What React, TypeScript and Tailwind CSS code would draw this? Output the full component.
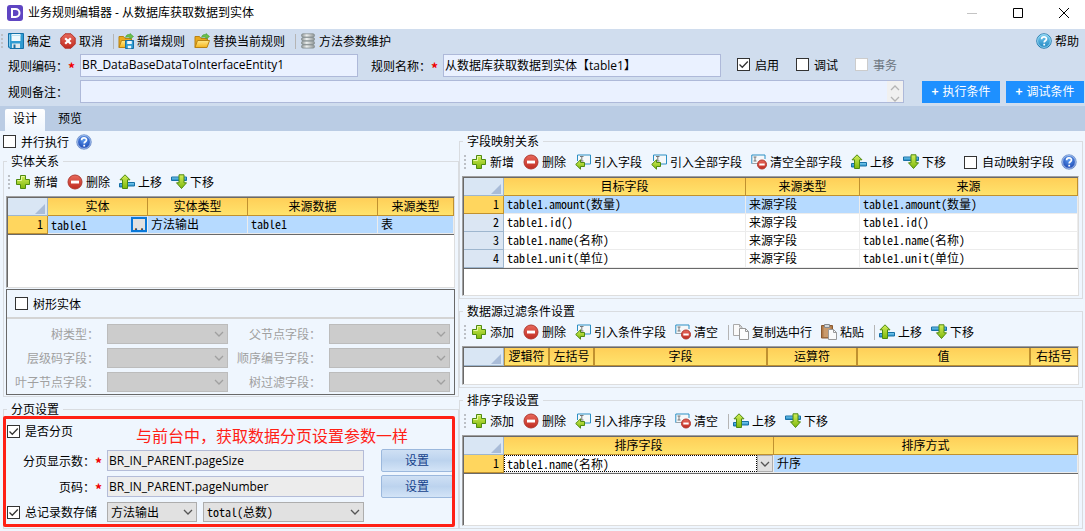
import { useId } from "react";
import type { ReactNode } from "react";
import clsx from "clsx";

const MONO = "font-['Noto_Sans_Mono_CJK_SC','Liberation_Mono','Noto_Sans_CJK_SC',monospace]";
const LATIN = "font-['Open_Sans','Noto_Sans_CJK_SC',sans-serif]";

/* ---------- icons ---------- */

function IconDefs() {
  return (
    <svg className="absolute h-0 w-0" aria-hidden="true">
      <defs>
        <linearGradient id="g-green" x1="0" y1="0" x2="0" y2="1">
          <stop offset="0" stopColor="#d2ee5a" />
          <stop offset="1" stopColor="#7fb80c" />
        </linearGradient>
        <linearGradient id="g-red" x1="0" y1="0" x2="0" y2="1">
          <stop offset="0" stopColor="#e8695c" />
          <stop offset="1" stopColor="#c02b20" />
        </linearGradient>
        <linearGradient id="g-blue" x1="0" y1="0" x2="0" y2="1">
          <stop offset="0" stopColor="#7fd0f2" />
          <stop offset="1" stopColor="#1b83c0" />
        </linearGradient>
        <linearGradient id="g-folder" x1="0" y1="0" x2="0" y2="1">
          <stop offset="0" stopColor="#ffe98a" />
          <stop offset="1" stopColor="#f5b41c" />
        </linearGradient>
        <linearGradient id="g-gray" x1="0" y1="0" x2="1" y2="0">
          <stop offset="0" stopColor="#8d9494" />
          <stop offset="0.4" stopColor="#eef1f1" />
          <stop offset="1" stopColor="#8d9494" />
        </linearGradient>
        <radialGradient id="g-navy" cx="0.5" cy="0.35" r="0.7">
          <stop offset="0" stopColor="#5b9bf0" />
          <stop offset="1" stopColor="#1238a8" />
        </radialGradient>
      </defs>
    </svg>
  );
}

function Icon({ children }: { children: ReactNode }) {
  return (
    <svg viewBox="0 0 16 16" className="size-4 shrink-0" fill="none" aria-hidden="true">
      {children}
    </svg>
  );
}

const PlusIcon = () => (
  <Icon>
    <path d="M5.5 1.5h5v4h4v5h-4v4h-5v-4h-4v-5h4z" fill="url(#g-green)" stroke="#4f8a10" />
    <path d="M6.5 2.5h3M6.5 2.5v4h-4" stroke="#e6f8a0" />
  </Icon>
);

const MinusIcon = () => (
  <Icon>
    <circle cx="8" cy="8" r="7" fill="url(#g-red)" stroke="#b03a30" />
    <path d="M4 6.6h8v2.9H4z" fill="#fff" />
  </Icon>
);

const CancelIcon = () => (
  <Icon>
    <path d="M5 .8h6L15.2 5v6L11 15.2H5L.8 11V5z" fill="url(#g-red)" stroke="#b23329" />
    <path d="M5.2 5.2l5.6 5.6M10.8 5.2l-5.6 5.6" stroke="#fff" strokeWidth="2.2" />
  </Icon>
);

const UpIcon = () => (
  <Icon>
    <path d="M.5 9.5h3V13h-3zM8 8.5h7.5V12H8z" fill="url(#g-blue)" stroke="#1670a6" />
    <path d="M6 .8l5 5H8.5v8.7h-5V5.8H1z" fill="url(#g-green)" stroke="#4f8a10" />
  </Icon>
);

const DownIcon = () => (
  <Icon>
    <path d="M.5 3h15v3.5H.5z" fill="url(#g-blue)" stroke="#1670a6" />
    <path d="M8 .8h5v8h2.5l-5 5.7-5-5.7H8z" fill="url(#g-green)" stroke="#4f8a10" />
  </Icon>
);

const ImportIcon = () => (
  <Icon>
    <path d="M2.5 1h13v9h-13z" fill="#f5f8fa" />
    <path d="M2.5 7V1h13v9H10" stroke="#2b8fc4" />
    <path d="M5 2.5h3.5M5 7h3.5M6.8 2.5V7" stroke="#777" />
    <path d="M.7 10.5l4.8-4.7v2.7h4v4h-4v2.7z" fill="url(#g-green)" stroke="#4f8a10" />
  </Icon>
);

const ClearIcon = () => (
  <Icon>
    <path d="M.8 1H14v8.5H.8z" fill="#f5f8fa" />
    <path d="M6 9.5H.8V1H14v4" stroke="#2b8fc4" />
    <path d="M.8 9.5H7" stroke="#9aa4ab" />
    <path d="M2.5 3h3M2.5 7h3M4 3v4" stroke="#777" />
    <circle cx="11" cy="10.5" r="4.5" fill="url(#g-red)" stroke="#b03a30" />
    <path d="M8.3 9.5h5.4v2H8.3z" fill="#fff" />
  </Icon>
);

const SaveIcon = () => (
  <Icon>
    <path d="M.5.5h15v15H2L.5 14z" fill="#2f9bd2" stroke="#1470a8" />
    <path d="M3.5 1h9v7h-9z" fill="#eef8fd" />
    <path d="M3.5 2.5h9" stroke="#b8dff2" />
    <path d="M4 10.5h8V15H4z" fill="#dfe8ee" />
    <path d="M5.5 11.5h2V15h-2z" fill="#1d6d9e" />
    <path d="M1.5 1.5v12" stroke="#7fcbee" />
  </Icon>
);

const FolderShape = () => (
  <>
    <path d="M1 14.5v-11h4.5l1.5 2h6.5v2" fill="#e9a91c" stroke="#b98212" />
    <path d="M1 14.5l2.5-7h12l-2.5 7z" fill="url(#g-folder)" stroke="#b98212" />
    <path d="M7.5 4.5C8 1.8 10 1 12 1.8V.5l3.5 3L12 6.200V4.500c-1.500-.6-3-.4-4.500 0z" fill="#6cc04a" stroke="#3f9a35" strokeWidth=".6" />
  </>
);

const ReplaceIcon = () => (
  <Icon>
    <FolderShape />
  </Icon>
);

const NewRuleIcon = () => (
  <Icon>
    <FolderShape />
    <path d="M7.5 7.5h8v8h-8z" fill="#2f9bd2" stroke="#1470a8" />
    <path d="M9.2 8h4.600v3H9.200zM9.800 12.800h3.400v2.400H9.800z" fill="#eef8fd" />
  </Icon>
);

const DatabaseIcon = () => (
  <Icon>
    {[0.8, 4.5, 8.2, 11.9].map((y) => (
      <rect key={y} x="1.5" y={y} width="13" height="3.2" rx="1.5" fill="url(#g-gray)" stroke="#7d8585" strokeWidth=".7" />
    ))}
  </Icon>
);

const CopyIcon = () => (
  <Icon>
    <path d="M.5.5h6L9 3v8.500H.5z" fill="#fafafa" stroke="#aaa" />
    <path d="M6.500.5V3H9" stroke="#aaa" />
    <path d="M6.500 4.500h6l3 3v8h-9z" fill="#fdfdfd" stroke="#999" />
    <path d="M12.500 4.500v3h3" stroke="#999" />
  </Icon>
);

const PasteIcon = () => (
  <Icon>
    <path d="M.5 1.500h11V14H.5z" fill="#b07a4a" stroke="#8a5a30" />
    <path d="M2.500 3h7v10h-7z" fill="#c99a6c" />
    <path d="M3.500.5h5v3h-5z" fill="#d5d8db" stroke="#85898d" />
    <path d="M7.500 5.500h5l3 3v7h-8z" fill="#fafafa" stroke="#999" />
    <path d="M12.500 5.500v3h3" stroke="#999" />
  </Icon>
);

function HelpIcon({ dark = false }: { dark?: boolean }) {
  return (
    <Icon>
      <circle cx="8" cy="8" r="7.3" fill={dark ? "url(#g-navy)" : "url(#g-blue)"} stroke={dark ? "#7f9fd0" : "#1670a6"} strokeWidth=".8" />
      <circle cx="8" cy="8" r="6.4" stroke={dark ? "#c4d8f5" : "#a5def5"} strokeWidth=".8" />
      <path d="M5.6 6.200c0-3 4.900-3 4.900-.2 0 1.800-2.300 1.700-2.300 3.400" stroke="#fff" strokeWidth="1.7" />
      <path d="M7.300 10.800h1.800v1.700H7.300z" fill="#fff" />
    </Icon>
  );
}

/* ---------- small controls ---------- */

type ToolProps = { icon: ReactNode; children: ReactNode };

function Tool({ icon, children }: ToolProps) {
  return (
    <button type="button" className="flex shrink-0 items-center gap-[3px] whitespace-nowrap">
      {icon}
      {children}
    </button>
  );
}

const Grip = () => (
  <span className="flex shrink-0 flex-col gap-0.5" aria-hidden="true">
    <i className="size-0.5 bg-[#bcc0c6]" />
    <i className="size-0.5 bg-[#bcc0c6]" />
    <i className="size-0.5 bg-[#bcc0c6]" />
    <i className="size-0.5 bg-[#bcc0c6]" />
  </span>
);

const Sep = () => <span className="-mr-[5px] ml-px h-[15px] w-px shrink-0 bg-[#b5b5b5]" />;

function Check({ label, checked, disabled }: { label: string; checked?: boolean; disabled?: boolean }) {
  return (
    <label className={clsx("flex shrink-0 items-center gap-[5px] whitespace-nowrap", disabled && "text-[#6d7580]")}>
      <span className="relative flex size-[13px]">
        <input
          type="checkbox"
          defaultChecked={checked}
          disabled={disabled}
          className="peer size-[13px] appearance-none border border-[#333] bg-white disabled:border-[#ccc]"
        />
        <svg viewBox="0 0 13 13" className="pointer-events-none absolute inset-0 hidden size-[13px] peer-checked:block" fill="none">
          <path d="M2.5 6.5l2.8 2.8 5.500-5.800" stroke="#333" strokeWidth="1.3" />
        </svg>
      </span>
      {label}
    </label>
  );
}

const Chevron = ({ up = false }: { up?: boolean }) => (
  <svg viewBox="0 0 10 6" className="h-1.5 w-2.5" fill="none" stroke="currentColor" strokeWidth="1.3">
    <path d={up ? "M1 5l4-4 4 4" : "M1 1l4 4 4-4"} />
  </svg>
);

type SelectProps = { id?: string; label?: string; value?: string; disabled?: boolean; className?: string };

function Select({ id, label, value = "", disabled, className }: SelectProps) {
  return (
    <span className={clsx("relative flex h-5 min-w-0", className)}>
      <select
        id={id}
        aria-label={label}
        disabled={disabled}
        className={clsx(
          "h-5 w-full appearance-none border border-[#adadad] bg-[#e1e1e1] pl-[3px] disabled:border-[#bcbcbc] disabled:bg-[#ccc] disabled:opacity-100",
          MONO,
        )}
      >
        <option>{value}</option>
      </select>
      <span className={clsx("pointer-events-none absolute top-[7px] right-1", disabled ? "text-[#a0a0a0]" : "text-[#555]")}>
        <Chevron />
      </span>
    </span>
  );
}

const Star = () => <span className="w-1.5 pt-1 text-center text-sm leading-4 font-bold text-[#f00000]">*</span>;

function Panel({ title, className, children }: { title: string; className?: string; children: ReactNode }) {
  return (
    <fieldset className={clsx("flex min-w-0 flex-col border border-[#d9dce0] pr-[3px] pl-0.5", className)}>
      <legend className="ml-px px-1 leading-[14px]">{title}</legend>
      {children}
    </fieldset>
  );
}

const ToolRow = ({ children }: { children: ReactNode }) => (
  <div className="flex h-7 shrink-0 items-center gap-[9px] pl-0.5">
    <span className="-mr-1 flex">
      <Grip />
    </span>
    {children}
  </div>
);

/* ---------- data grid ---------- */

type Column = { title: string; width?: number };

type GridProps = {
  columns: Column[];
  rows?: ReactNode[][];
  active?: number;
  thick?: boolean;
  className?: string;
};

function Grid({ columns, rows = [], active = 0, thick, className }: GridProps) {
  return (
    <div className={clsx("flex border border-t-[#a0a0a0] border-r-[#dedede] border-b-[#dedede] border-l-[#a0a0a0]", className)}>
      <div className="min-w-0 flex-1 border-t border-l border-[#696969] bg-white">
        <table className="w-full table-fixed border-separate border-spacing-0 border-b border-[#696969]">
          <colgroup>
            <col style={{ width: 40 }} />
            {columns.map((c) => (
              <col key={c.title} style={{ width: c.width }} />
            ))}
          </colgroup>
          <thead>
            <tr className="h-[18px]">
              <th className="border-r border-b border-[#9eb6ce] bg-[#d9e6f4] p-0">
                <svg viewBox="0 0 10 10" className="mt-1 mr-0.5 ml-auto size-2.5" aria-hidden="true">
                  <path d="M10 0v10H0z" fill="#a9bcd8" />
                </svg>
              </th>
              {columns.map((c) => (
                <th
                  key={c.title}
                  className={clsx(
                    "h-[18px] border-r border-b border-[#c0912f] bg-linear-to-b from-[#ffcf58] to-[#ffe36c] p-0 align-top leading-4 font-normal whitespace-nowrap",
                    thick && "border-l",
                  )}
                >
                  {c.title}
                </th>
              ))}
            </tr>
          </thead>
          <tbody>
            {rows.map((row, r) => (
              <tr key={r} className="h-[18px]">
                <td
                  className={clsx(
                    "h-[18px] border-r border-b p-0 pr-1 text-right align-top leading-4",
                    MONO,
                    r === active ? "border-[#c0912f] bg-[#ffd65e]" : "border-[#9eb6ce] bg-[#dbe6f3]",
                  )}
                >
                  {r + 1}
                </td>
                {row.map((cell, c) => (
                  <td
                    key={c}
                    className={clsx(
                      "h-[18px] border-r border-b border-[#ececec] p-0 align-top leading-[15px] whitespace-nowrap",
                      typeof cell === "string" && "pl-[3px]",
                      MONO,
                      r === active && "bg-[#b6daff]",
                    )}
                  >
                    {cell}
                  </td>
                ))}
              </tr>
            ))}
          </tbody>
        </table>
      </div>
    </div>
  );
}

const mappings = [
  ["table1.amount(数量)", "来源字段", "table1.amount(数量)"],
  ["table1.id()", "来源字段", "table1.id()"],
  ["table1.name(名称)", "来源字段", "table1.name(名称)"],
  ["table1.unit(单位)", "来源字段", "table1.unit(单位)"],
];

const treeFields = ["树类型：", "父节点字段：", "层级码字段：", "顺序编号字段：", "叶子节点字段：", "树过滤字段："];

/* ---------- sections ---------- */

function TitleBar() {
  return (
    <header className="flex h-[29px] items-center bg-white pr-4 pb-[3px] pl-[7px]">
      <svg viewBox="0 0 16 16" className="size-4" aria-hidden="true">
        <rect width="16" height="16" rx="3" fill="#5f45c2" />
        <path d="M5 4h3.5a4 4 0 0 1 0 8H5z" fill="none" stroke="#fff" strokeWidth="2" />
      </svg>
      <h1 className={clsx("ml-[5px]", LATIN)}>业务规则编辑器 - 从数据库获取数据到实体</h1>
      <div className="ml-auto flex items-center gap-9">
        <button type="button" aria-label="最小化">
          <svg viewBox="0 0 10 10" className="size-2.5" stroke="#c4c4c4"><path d="M0 5.5h10" /></svg>
        </button>
        <button type="button" aria-label="最大化">
          <svg viewBox="0 0 10 10" className="size-2.5" fill="none" stroke="#000"><path d="M.5.5h9v9h-9z" /></svg>
        </button>
        <button type="button" aria-label="关闭">
          <svg viewBox="0 0 10 10" className="size-2.5" stroke="#000"><path d="M0 0l10 10M10 0L0 10" /></svg>
        </button>
      </div>
    </header>
  );
}

function RuleForm() {
  const id = useId();
  const field = clsx("h-[23px] min-w-0 flex-1 border border-[#aeb9d9] bg-[#eaf1ff] pb-0.5 pl-px", LATIN);
  const blueButton = "flex h-[22px] w-[78px] shrink-0 items-center justify-center gap-1 bg-[#1e90ff] pb-0.5 text-white";

  return (
    <section className="bg-[#d0ddee] pb-[3px]">
      <div className="flex h-6 items-center gap-[9px] pr-1.5 pl-px">
        <span className="-mr-1 flex">
          <Grip />
        </span>
        <Tool icon={<SaveIcon />}>确定</Tool>
        <Tool icon={<CancelIcon />}>取消</Tool>
        <Sep />
        <Tool icon={<NewRuleIcon />}>新增规则</Tool>
        <Tool icon={<ReplaceIcon />}>替换当前规则</Tool>
        <Sep />
        <Tool icon={<DatabaseIcon />}>方法参数维护</Tool>
        <span className="ml-auto">
          <Tool icon={<HelpIcon />}>帮助</Tool>
        </span>
      </div>

      <div className="flex items-center pt-px pl-2">
        <label htmlFor={id + "code"} className="flex w-[72px] shrink-0 items-center">
          规则编码：
          <Star />
        </label>
        <input id={id + "code"} className={field} defaultValue="BR_DataBaseDataToInterfaceEntity1" />
        <label htmlFor={id + "name"} className="ml-[13px] flex w-[72px] shrink-0 items-center">
          规则名称：
          <Star />
        </label>
        <input id={id + "name"} className={field} defaultValue="从数据库获取数据到实体【table1】" />
        <div className="flex w-[364px] shrink-0 gap-[17px] pb-0.5 pl-4">
          <Check label="启用" checked />
          <Check label="调试" />
          <Check label="事务" disabled />
        </div>
      </div>

      <div className="mt-[3px] flex items-center pr-px pl-2">
        <label htmlFor={id + "memo"} className="w-[72px] shrink-0">
          规则备注：
        </label>
        <div className="flex h-[23px] min-w-0 flex-1 border border-[#aeb9d9] bg-[#eaf1ff]">
          <textarea id={id + "memo"} className="min-w-0 flex-1 resize-none overflow-hidden" />
          <span className="flex w-4 flex-col items-center justify-between bg-[#f0f0f0] pt-1 text-[#b4b4b4]">
            <Chevron up />
            <Chevron />
          </span>
        </div>
        <div className="flex gap-1.5 pl-[18px]">
          <button type="button" className={blueButton}>
            <b>+</b>执行条件
          </button>
          <button type="button" className={blueButton}>
            <b>+</b>调试条件
          </button>
        </div>
      </div>
    </section>
  );
}

function EntityPanel() {
  const id = useId();

  return (
    <Panel title="实体关系" className="shrink-0 pb-px">
      <ToolRow>
        <Tool icon={<PlusIcon />}>新增</Tool>
        <Tool icon={<MinusIcon />}>删除</Tool>
        <Tool icon={<UpIcon />}>上移</Tool>
        <Tool icon={<DownIcon />}>下移</Tool>
      </ToolRow>
      <Grid
        className="h-[92px]"
        columns={[{ title: "实体", width: 100 }, { title: "实体类型", width: 100 }, { title: "来源数据", width: 130 }, { title: "来源类型" }]}
        rows={[
          [
            <div className="flex h-[17px] items-center justify-between pl-[3px]">
              table1
              <button type="button" className="h-[15px] w-4 border-2 border-[#0a78d7] bg-[#e1e1e1] leading-[6px]">
                ..
              </button>
            </div>,
            "方法输出",
            "table1",
            "表",
          ],
        ]}
      />
      <div className="mt-px border border-[#696969] pb-0.5">
        <div className="flex h-[29px] items-center border-b-2 border-[#d4d4d4] pl-2">
          <Check label="树形实体" />
        </div>
        <div className="grid grid-cols-[100px_1fr_101px_1fr] gap-y-1 pt-[5px] pr-1 text-[#a0a0a0]">
          {treeFields.map((f) => (
            <div key={f} className="contents">
              <label htmlFor={id + f} className="pr-2 text-right leading-5">
                {f}
              </label>
              <Select id={id + f} disabled />
            </div>
          ))}
        </div>
      </div>
    </Panel>
  );
}

function PagingPanel() {
  const id = useId();
  const field = clsx("h-[21px] min-w-0 flex-1 border border-[#b4bcd8] bg-[#ececec] pl-px", LATIN);
  const setButton =
    "mr-0.5 ml-[17px] h-[23px] w-[72px] rounded-xs border border-[#9bb8dd] bg-linear-to-b from-[#cfe0f4] via-[#bcd3ee] to-[#d3e4f7] pb-0.5 text-[#15428b]";
  const rows = [
    { label: "分页显示数：", value: "BR_IN_PARENT.pageSize" },
    { label: "页码：", value: "BR_IN_PARENT.pageNumber" },
  ];

  return (
    <Panel title="分页设置" className="flex-1">
      <div className="relative flex flex-col gap-[3px] pb-1">
        <div className="flex h-[30px] items-center pl-px">
          <Check label="是否分页" checked />
        </div>
        {rows.map((r) => (
          <div key={r.label} className="flex h-[23px] items-center">
            <label htmlFor={id + r.label} className="flex w-[101px] shrink-0 items-center justify-end pr-1.5">
              {r.label}
              <Star />
            </label>
            <input id={id + r.label} readOnly className={field} defaultValue={r.value} />
            <button type="button" className={setButton}>
              设置
            </button>
          </div>
        ))}
        <div className="flex h-[22px] items-center pr-[91px]">
          <div className="w-[101px] shrink-0 pl-px">
            <Check label="总记录数存储" checked />
          </div>
          <Select label="存储方式" value="方法输出" className="w-[90px]" />
          <Select label="存储字段" value="total(总数)" className="ml-1.5 flex-1" />
        </div>
        <div className="pointer-events-none absolute inset-y-0 right-0 -left-[3px] rounded-xs border-[3px] border-[#ff2015]">
          <p className="pt-1.5 pl-[130px] text-base leading-5 text-[#ff2015]">与前台中，获取数据分页设置参数一样</p>
        </div>
      </div>
    </Panel>
  );
}

export default function App() {
  return (
    <main className="flex min-h-screen flex-col bg-[#eff6fe] font-['Noto_Sans_CJK_SC',sans-serif] text-xs leading-4 text-black">
      <IconDefs />
      <TitleBar />
      <RuleForm />

      <nav className="flex h-[25px] items-end bg-[#bacce4] pl-[5px]">
        <button type="button" className="h-[22px] w-10 rounded-t-xs bg-linear-to-b from-white to-[#eff6fe] pb-1">
          设计
        </button>
        <button type="button" className="h-[22px] w-[50px] pb-1">
          预览
        </button>
      </nav>

      <div className="grid flex-1 grid-cols-[456px_1fr] pr-0.5 pb-0.5 pl-[3px]">
        <div className="flex min-w-0 flex-col">
          <div className="flex h-[23px] shrink-0 items-center gap-[7px] pb-0.5">
            <Check label="并行执行" />
            <button type="button" aria-label="说明">
              <HelpIcon dark />
            </button>
          </div>
          <EntityPanel />
          <div className="h-[5px]" />
          <PagingPanel />
        </div>

        <div className="flex min-w-0 flex-col gap-[5px] pt-[3px]">
          <Panel title="字段映射关系" className="pb-0.5">
            <ToolRow>
              <Tool icon={<PlusIcon />}>新增</Tool>
              <Tool icon={<MinusIcon />}>删除</Tool>
              <Tool icon={<ImportIcon />}>引入字段</Tool>
              <Tool icon={<ImportIcon />}>引入全部字段</Tool>
              <Tool icon={<ClearIcon />}>清空全部字段</Tool>
              <Tool icon={<UpIcon />}>上移</Tool>
              <Tool icon={<DownIcon />}>下移</Tool>
              <div className="ml-auto flex items-center gap-[7px] pr-0.5">
                <Check label="自动映射字段" />
                <button type="button" aria-label="说明">
                  <HelpIcon dark />
                </button>
              </div>
            </ToolRow>
            <Grid
              className="h-[120px]"
              columns={[{ title: "目标字段", width: 242 }, { title: "来源类型", width: 114 }, { title: "来源" }]}
              rows={mappings}
            />
          </Panel>

          <Panel title="数据源过滤条件设置" className="pb-0.5">
            <ToolRow>
              <Tool icon={<PlusIcon />}>添加</Tool>
              <Tool icon={<MinusIcon />}>删除</Tool>
              <Tool icon={<ImportIcon />}>引入条件字段</Tool>
              <Tool icon={<ClearIcon />}>清空</Tool>
              <Sep />
              <Tool icon={<CopyIcon />}>复制选中行</Tool>
              <Tool icon={<PasteIcon />}>粘贴</Tool>
              <Sep />
              <Tool icon={<UpIcon />}>上移</Tool>
              <Tool icon={<DownIcon />}>下移</Tool>
            </ToolRow>
            <Grid
              thick
              className="h-[39px]"
              columns={[
                { title: "逻辑符", width: 45 },
                { title: "左括号", width: 45 },
                { title: "字段" },
                { title: "运算符", width: 90 },
                { title: "值", width: 173 },
                { title: "右括号", width: 48 },
              ]}
            />
          </Panel>

          <Panel title="排序字段设置" className="flex-1 pb-0.5">
            <ToolRow>
              <Tool icon={<PlusIcon />}>添加</Tool>
              <Tool icon={<MinusIcon />}>删除</Tool>
              <Tool icon={<ImportIcon />}>引入排序字段</Tool>
              <Tool icon={<ClearIcon />}>清空</Tool>
              <Sep />
              <Tool icon={<UpIcon />}>上移</Tool>
              <Tool icon={<DownIcon />}>下移</Tool>
            </ToolRow>
            <Grid
              className="flex-1"
              columns={[{ title: "排序字段", width: 270 }, { title: "排序方式" }]}
              rows={[
                [
                  <div className="flex h-[17px] bg-white">
                    <input
                      aria-label="排序字段"
                      className="min-w-0 flex-1 border border-dotted border-black pl-0.5"
                      defaultValue="table1.name(名称)"
                    />
                    <button type="button" aria-label="展开" className="flex w-4 items-center justify-center border border-[#adadad] bg-[#e1e1e1] text-[#555]">
                      <Chevron />
                    </button>
                  </div>,
                  "升序",
                ],
              ]}
            />
          </Panel>
        </div>
      </div>
    </main>
  );
}
